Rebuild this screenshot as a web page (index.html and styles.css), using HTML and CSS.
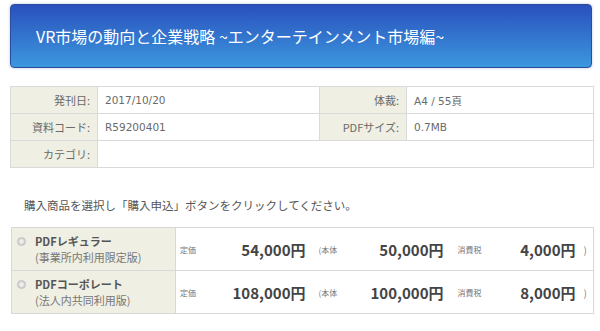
FILE: index.html
```html
<!DOCTYPE html>
<html lang="ja">
<head>
    <meta charset="UTF-8">
    <title>VR市場の動向と企業戦略</title>
    <link rel="stylesheet" href="styles.css">
</head>
<body>
    <main>
        <h1 class="title">VR市場の動向と企業戦略 ~エンターテインメント市場編~</h1>

        <table class="info">
            <tr>
                <th>発刊日:</th>
                <td class="wide">2017/10/20</td>
                <th>体裁:</th>
                <td>A4 / 55頁</td>
            </tr>
            <tr>
                <th>資料コード:</th>
                <td class="wide">R59200401</td>
                <th>PDFサイズ:</th>
                <td>0.7MB</td>
            </tr>
            <tr>
                <th>カテゴリ:</th>
                <td colspan="3"></td>
            </tr>
        </table>

        <p class="note">購入商品を選択し「購入申込」ボタンをクリックしてください。</p>

        <table class="buy">
            <tr>
                <th>
                    <span class="radio"></span>
                    <span class="name">PDFレギュラー</span>
                    <span class="sub">(事業所内利用限定版)</span>
                </th>
                <td class="lbl">定価</td>
                <td class="price p1">54,000円</td>
                <td class="lbl l2">(本体</td>
                <td class="price p2">50,000円</td>
                <td class="lbl l3">消費税</td>
                <td class="price p3">4,000円</td>
                <td class="close">)</td>
            </tr>
            <tr>
                <th>
                    <span class="radio"></span>
                    <span class="name">PDFコーポレート</span>
                    <span class="sub">(法人内共同利用版)</span>
                </th>
                <td class="lbl">定価</td>
                <td class="price p1">108,000円</td>
                <td class="lbl l2">(本体</td>
                <td class="price p2">100,000円</td>
                <td class="lbl l3">消費税</td>
                <td class="price p3">8,000円</td>
                <td class="close">)</td>
            </tr>
        </table>
    </main>
</body>
</html>
```

FILE: styles.css
```css
* {
    box-sizing: border-box;
}

body {
    margin: 0;
    background-color: white;
    color: #555;
    font-family: "Noto Sans CJK JP", "DejaVu Sans", sans-serif;
}

main {
    padding: 4px 6px 0 10px;
}

.title {
    margin: 0 2px 0 0;
    height: 64px;
    padding: 0 0 0 25px;
    display: flex;
    align-items: center;

    font-size: 16px;
    font-weight: normal;
    color: white;

    background: linear-gradient(#2a50bd, #3b98de);
    border: 1px solid #2a4c9e;
    border-radius: 4px;
    box-shadow: 0 0 3px rgba(60, 90, 170, 0.35);
}

table {
    border-collapse: collapse;
    width: 584px;
}

.info {
    margin-top: 18px;
}

.info th,
.info td {
    height: 27px;
    border: 1px solid #dadada;
    font-size: 11px;
    padding: 0 7px;
}

.info th {
    width: 87px;
    background-color: #efefe3;
    font-weight: normal;
    text-align: right;
    color: #6a6a6a;
}

.info td {
    font-family: "DejaVu Sans", "Noto Sans CJK JP", sans-serif;
    font-size: 10.5px;
    color: #6a6a6a;
}

.info td.wide {
    width: 222px;
}

.note {
    margin: 29px 0 0 14px;
    font-size: 11.5px;
    color: #555;
    height: 22px;
}

.buy {
    margin: 8px 0 0 1px;
    width: 583px;
}

.buy th,
.buy td {
    height: 43px;
    border-top: 1px solid #d8d8d8;
    border-bottom: 1px solid #d8d8d8;
    padding: 0;
}

.buy th {
    width: 164px;
    background-color: #efefe3;
    border-left: 1px solid #d8d8d8;
    border-right: 1px solid #d8d8d8;
    text-align: left;
    vertical-align: top;
    font-weight: normal;
    position: relative;
    padding: 5px 0 0 23px;
}

.radio {
    position: absolute;
    left: 5px;
    top: 9px;
    width: 9px;
    height: 9px;
    border-radius: 50%;
    background: radial-gradient(#eee 30%, #c4c4c4 75%);
    border: 1px solid #c8c8c8;
}

.name {
    display: block;
    font-size: 11px;
    font-weight: bold;
    color: #555;
    line-height: 16px;
}

.sub {
    display: block;
    font-size: 11px;
    color: #777;
    line-height: 16px;
}

.lbl {
    font-size: 8px;
    color: #777;
    padding-left: 4px !important;
}

.buy td.lbl {
    width: 40px;
}

.buy td.l2 {
    width: 40px;
    padding-left: 8px !important;
}

.buy td.l3 {
    width: 42px;
    padding-left: 9px !important;
}

.price {
    text-align: right;
    font-size: 15px;
    font-weight: bold;
    color: #444;
    padding-right: 5px !important;
}

.p1 {
    width: 95px;
}

.p2 {
    width: 98px;
}

.p3 {
    width: 90px;
}

.close {
    font-size: 10px;
    color: #888;
    border-right: 1px solid #d8d8d8 !important;
    padding-left: 3px !important;
}
```
